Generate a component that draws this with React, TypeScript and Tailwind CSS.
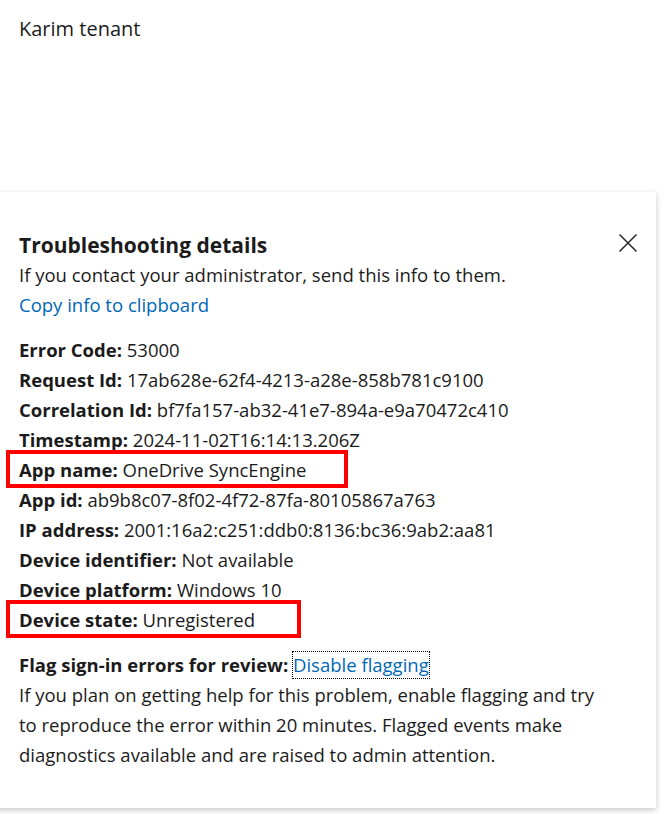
const rows: { label: string; value: string; mark?: "wide" | "narrow" }[] = [
  { label: "Error Code:", value: "53000" },
  { label: "Request Id:", value: "17ab628e-62f4-4213-a28e-858b781c9100" },
  { label: "Correlation Id:", value: "bf7fa157-ab32-41e7-894a-e9a70472c410" },
  { label: "Timestamp:", value: "2024-11-02T16:14:13.206Z" },
  { label: "App name:", value: "OneDrive SyncEngine", mark: "wide" },
  { label: "App id:", value: "ab9b8c07-8f02-4f72-87fa-80105867a763" },
  { label: "IP address:", value: "2001:16a2:c251:ddb0:8136:bc36:9ab2:aa81" },
  { label: "Device identifier:", value: "Not available" },
  { label: "Device platform:", value: "Windows 10" },
  { label: "Device state:", value: "Unregistered", mark: "narrow" },
];

function CloseIcon() {
  return (
    <svg width="20" height="20" viewBox="0 0 20 20" fill="none" stroke="#262626" strokeWidth="1.5">
      <path d="M1.5 1.5 L18.5 18.5 M18.5 1.5 L1.5 18.5" />
    </svg>
  );
}

export default function App() {
  return (
    <div className="min-h-screen overflow-hidden bg-white font-['Open_Sans','Noto_Sans',sans-serif] text-[#1b1b1b]">
      <div className="px-[19px] pt-[15px] text-[20px] leading-[28px]">Karim tenant</div>

      <div className="mt-[149px] ml-[-10px] w-[666px] bg-white pb-[38px] pl-[29px] pr-[20px] pt-[33px] shadow-[0_2px_6px_rgba(0,0,0,0.22)]">
        <div className="flex items-start justify-between">
          <h2 className="text-[21px] font-bold leading-[40px]">Troubleshooting details</h2>
          <button type="button" className="mt-[8px] mr-[-2px]">
            <CloseIcon />
          </button>
        </div>
        <p className="text-[18.5px] leading-[22px] -mt-[1px]">If you contact your administrator, send this info to them.</p>
        <a className="mt-[8px] block text-[18.5px] leading-[22px] text-[#0067b8]">Copy info to clipboard</a>

        <div className="mt-[19px] text-[18.5px] leading-[30px]">
          {rows.map((row) => (
            <div key={row.label} className="relative">
              {row.mark ? (
                <div
                  className={`pointer-events-none absolute left-[-13px] top-[-5px] h-[38px] border-[4px] border-[#ff0000] ${
                    row.mark === "wide" ? "w-[342px]" : "w-[295px]"
                  }`}
                />
              ) : null}
              <span className="font-bold">{row.label}</span> {row.value}
            </div>
          ))}
        </div>

        <div className="mt-[15px] text-[18.5px] leading-[30px]">
          <span className="font-bold">Flag sign-in errors for review:</span>{" "}
          <a className="inline-block leading-[26px] outline-1 outline-dotted outline-black text-[#0067b8]">
            Disable flagging
          </a>
          <p className="max-w-[585px]">
            If you plan on getting help for this problem, enable flagging and try to reproduce the error within 20
            minutes. Flagged events make diagnostics available and are raised to admin attention.
          </p>
        </div>
      </div>
    </div>
  );
}
